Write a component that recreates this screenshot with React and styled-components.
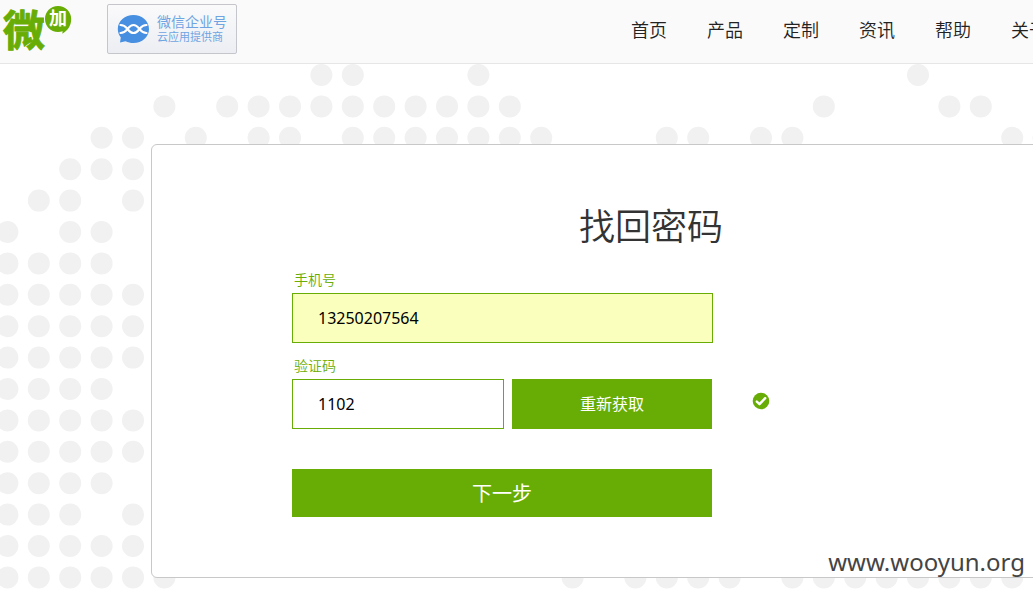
import React, { useState } from 'react';
import styled, { createGlobalStyle } from 'styled-components';

const GlobalStyle = createGlobalStyle`
  * {
    box-sizing: border-box;
  }
  html, body {
    margin: 0;
    background: #fff;
    overflow: hidden;
  }
  body, input, button {
    font-family: "Noto Sans", "Noto Sans CJK SC", sans-serif;
  }
`;

const Page = styled.div`
  position: relative;
  min-height: 100vh;
  overflow: hidden;
  color: #333;
`;

const Header = styled.header`
  display: flex;
  align-items: flex-start;
  height: 64px;
  min-width: 1047px;
  padding-left: 3px;
  background: #fafafa;
  border-bottom: 1px solid #e6e6e6;
`;

const LogoLink = styled.a`
  display: block;
  width: 72px;
  height: 60px;
  margin-right: 32px;
  font-family: "Noto Sans CJK SC", sans-serif;

  svg {
    display: block;
    overflow: visible;
  }
`;

const Partner = styled.a`
  display: flex;
  align-items: center;
  gap: 7px;
  width: 130px;
  height: 50px;
  margin-top: 4px;
  padding: 0 9px;
  border: 1px solid #c4c6cc;
  border-radius: 2px;
  background: linear-gradient(#fafafb, #eceef3);
  color: #6fa4e2;
  text-decoration: none;
  white-space: nowrap;
  font-family: "Noto Sans CJK SC", sans-serif;

  svg {
    flex: none;
  }
`;

const PartnerText = styled.span`
  display: flex;
  flex-direction: column;
  padding-bottom: 2px;
`;

const PartnerLine = styled.span`
  font-size: ${({ $small }) => ($small ? 11 : 14)}px;
  line-height: ${({ $small }) => ($small ? 14 : 16)}px;
`;

const Nav = styled.nav`
  display: flex;
  gap: 40px;
  margin-left: auto;
`;

const NavLink = styled.a`
  font-family: "Noto Sans CJK SC", sans-serif;
  font-size: 18px;
  font-weight: 350;
  line-height: 58px;
  color: #222;
  text-decoration: none;
  white-space: nowrap;
`;

const Main = styled.main`
  position: relative;
  padding: 80px 0 14px 151px;
`;

const Dots = styled.svg`
  position: absolute;
  top: 0;
  left: 0;
  fill: #f1f1f1;
`;

const Card = styled.section`
  position: relative;
  min-width: 1000px;
  padding: 52px 140px 60px;
  border: 1px solid #c8c8c8;
  border-radius: 6px;
  background: #fff;
`;

const Title = styled.h1`
  margin: 0 0 18px;
  font-family: "Noto Sans CJK SC", sans-serif;
  font-size: 36px;
  font-weight: 350;
  line-height: 54px;
  text-align: center;
`;

const Form = styled.form`
  display: flex;
  flex-direction: column;
`;

const Field = styled.div`
  display: flex;
  flex-direction: column;
  margin-bottom: ${({ $last }) => ($last ? 40 : 12)}px;
`;

const Label = styled.label`
  padding: 0 0 2px 2px;
  font-size: 14px;
  font-weight: 350;
  line-height: 22px;
  color: #68ad05;
`;

const Row = styled.div`
  display: flex;
  align-items: center;
`;

const Input = styled.input`
  width: ${({ $short }) => ($short ? 212 : 421)}px;
  height: 50px;
  padding: 0 25px;
  border: 1px solid #68ad05;
  border-radius: 0;
  outline: none;
  background: ${({ $filled }) => ($filled ? '#faffbd' : '#fff')};
  color: #000;
  font-size: 16px;
`;

const Button = styled.button`
  width: ${({ $wide }) => ($wide ? 420 : 200)}px;
  height: ${({ $wide }) => ($wide ? 48 : 50)}px;
  margin-left: ${({ $wide }) => ($wide ? 0 : 8)}px;
  padding: 0 0 2px;
  border: none;
  background: #68ad05;
  color: #fff;
  font-size: ${({ $wide }) => ($wide ? 20 : 16)}px;
  cursor: pointer;
`;

const Passed = styled.svg`
  margin: 0 0 6px 40px;
`;

const Watermark = styled.span`
  position: absolute;
  right: 8px;
  bottom: 13px;
  font-family: "Noto Sans", sans-serif;
  font-size: 24px;
  line-height: 34px;
  color: #444;
`;

const NAV = ['首页', '产品', '定制', '资讯', '帮助', '关于'];

const STEP = 31.4;

// [first, last] column ranges of the world map, row by row
const MAP = [
  [[10, 11], [15, 15], [29, 29]],
  [[5, 5], [7, 16], [26, 26], [30, 31]],
  [[3, 4], [6, 6], [8, 9], [11, 17], [21, 22], [24, 25], [32, 33]],
  [[2, 4]],
  [[1, 2], [4, 4]],
  [[0, 0], [2, 3]],
  [[0, 3]],
  [[0, 4]],
  [[0, 4]],
  [[0, 4]],
  [[0, 3]],
  [[0, 4]],
  [[0, 4]],
  [[0, 3]],
  [[0, 2], [4, 4]],
  [[0, 4]],
  [[0, 5], [18, 18], [20, 23], [25, 32]],
];

const DotMap = () => (
  <Dots width="1060" height="526" aria-hidden="true">
    {MAP.map((ranges, row) =>
      ranges.map(([from, to]) =>
        Array.from({ length: to - from + 1 }, (_, i) => (
          <circle
            key={`${row}-${from + i}`}
            cx={7.4 + STEP * (from + i)}
            cy={11 + STEP * row}
            r="11"
          />
        ))
      )
    )}
  </Dots>
);

const Logo = () => (
  <svg width="72" height="60" viewBox="0 0 72 60" role="img" aria-label="微加">
    <text
      x="0"
      y="46"
      fontSize="42"
      fontWeight="700"
      fill="#68ad05"
      stroke="#68ad05"
      strokeWidth="1"
      strokeLinejoin="round"
    >
      微
    </text>
    <circle cx="55" cy="19" r="14" fill="#fafafa" />
    <path d="M55 6c7.500 0 13.200 5.800 13.200 13 0 6.800-3.400 11.500-9 14.800l.5-2.600c-1.500.6-3 .8-4.700.8-7.400 0-13-5.800-13-13s5.600-13 13-13z" fill="#68ad05" />
    <text x="46" y="25" fontSize="18" fontWeight="700" fill="#fff">
      加
    </text>
  </svg>
);

const ChatIcon = () => (
  <svg width="33" height="30" viewBox="0 0 33 30" aria-hidden="true">
    <path d="M16.500 1C25 1 32 7 32 15s-7 14-15.500 14c-3 0-5.500-.6-8-1.800L3 28.600l.8-5.200C1.900 21 .8 18.200.8 15 .8 7 8 1 16.500 1z" fill="#478fe0" />
    <g fill="none" stroke="#fff" strokeWidth="2.200" strokeLinecap="round">
      <path d="M3.500 11c4 0 5 1.500 7 4s3 4 6 4 4-1.500 6-4 3-4 7-4" />
      <path d="M3.500 19c4 0 5-1.500 7-4s3-4 6-4 4 1.500 6 4 3 4 7 4" />
    </g>
  </svg>
);

const App = () => {
  const [phone, setPhone] = useState('13250207564');
  const [code, setCode] = useState('1102');

  return (
    <Page>
      <GlobalStyle />
      <Header>
        <LogoLink href="#">
          <Logo />
        </LogoLink>
        <Partner href="#">
          <ChatIcon />
          <PartnerText>
            <PartnerLine>微信企业号</PartnerLine>
            <PartnerLine $small>云应用提供商</PartnerLine>
          </PartnerText>
        </Partner>
        <Nav>
          {NAV.map((item) => (
            <NavLink key={item} href="#">{item}</NavLink>
          ))}
        </Nav>
      </Header>

      <Main>
        <DotMap />
        <Card>
          <Title>找回密码</Title>
          <Form onSubmit={(e) => e.preventDefault()}>
            <Field>
              <Label htmlFor="phone">手机号</Label>
              <Input id="phone" type="text" $filled value={phone} onChange={(e) => setPhone(e.target.value)} />
            </Field>
            <Field $last>
              <Label htmlFor="code">验证码</Label>
              <Row>
                <Input id="code" type="text" $short value={code} onChange={(e) => setCode(e.target.value)} />
                <Button type="button">重新获取</Button>
                <Passed width="18" height="18" viewBox="0 0 18 18" aria-hidden="true">
                  <circle cx="9" cy="9" r="8.300" fill="#68ad05" />
                  <path d="M4.800 9.600l2.700 2.600 5.700-6" fill="none" stroke="#fff" strokeWidth="2.400" strokeLinecap="round" strokeLinejoin="round" />
                </Passed>
              </Row>
            </Field>
            <Button type="submit" $wide>下一步</Button>
          </Form>
        </Card>
      </Main>
      <Watermark>www.wooyun.org</Watermark>
    </Page>
  );
};

export default App;
